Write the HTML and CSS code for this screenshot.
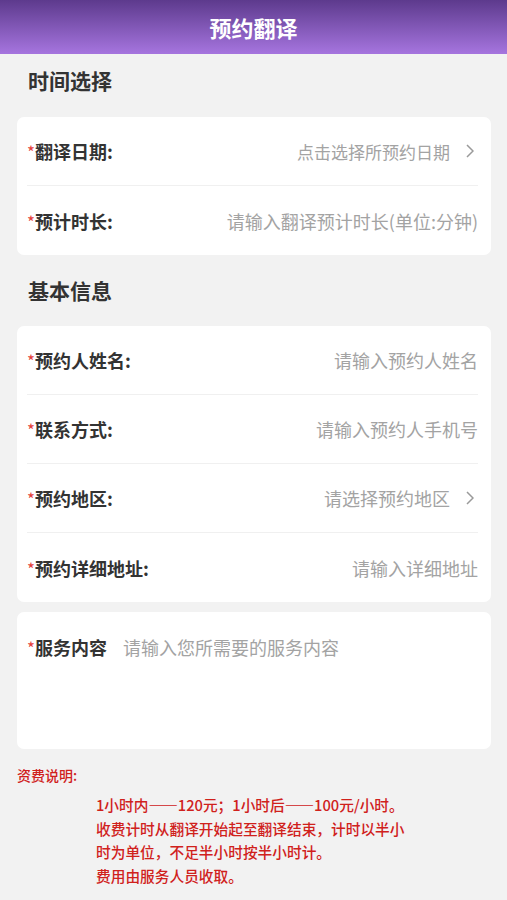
FILE: index.html
```html
<!DOCTYPE html>
<html lang="zh-CN">
<head>
    <meta charset="UTF-8">
    <meta name="viewport" content="width=device-width, initial-scale=1.0">
    <title>预约翻译</title>
    <link rel="stylesheet" href="styles.css">
</head>
<body>
    <div class="top_bar">预约翻译</div>

    <div class="sec_title first">时间选择</div>
    <div class="card">
        <div class="row">
            <span class="label"><i>*</i>翻译日期:</span>
            <span class="value pick">点击选择所预约日期</span>
            <span class="arrow"><svg width="8" height="14" viewBox="0 0 8 14"><path d="M1 1l6 6-6 6" fill="none" stroke="#9a9a9a" stroke-width="1.5"/></svg></span>
        </div>
        <div class="row">
            <span class="label"><i>*</i>预计时长:</span>
            <span class="value">请输入翻译预计时长(单位:分钟)</span>
        </div>
    </div>

    <div class="sec_title">基本信息</div>
    <div class="card">
        <div class="row">
            <span class="label"><i>*</i>预约人姓名:</span>
            <span class="value">请输入预约人姓名</span>
        </div>
        <div class="row">
            <span class="label"><i>*</i>联系方式:</span>
            <span class="value">请输入预约人手机号</span>
        </div>
        <div class="row">
            <span class="label"><i>*</i>预约地区:</span>
            <span class="value">请选择预约地区</span>
            <span class="arrow"><svg width="8" height="14" viewBox="0 0 8 14"><path d="M1 1l6 6-6 6" fill="none" stroke="#9a9a9a" stroke-width="1.5"/></svg></span>
        </div>
        <div class="row">
            <span class="label"><i>*</i>预约详细地址:</span>
            <span class="value">请输入详细地址</span>
        </div>
    </div>

    <div class="card textarea_card">
        <span class="label"><i>*</i>服务内容</span>
        <span class="ta_holder">请输入您所需要的服务内容</span>
    </div>

    <div class="fee_title">资费说明:</div>
    <div class="fee_text">
        <p>1小时内——120元；1小时后——100元/小时。</p>
        <p>收费计时从翻译开始起至翻译结束，计时以半小时为单位，不足半小时按半小时计。</p>
        <p>费用由服务人员收取。</p>
    </div>
</body>
</html>
```

FILE: styles.css
```css
body { margin:0; background:#f2f2f2; font-family:"Noto Sans CJK SC", "Liberation Sans", sans-serif; color:#333; }

.top_bar { height:54px; line-height:54px; text-align:center; color:#fff; font-size:22px; font-weight:bold;
    background:linear-gradient(to bottom, #5d3a8d, #a675df); }

.sec_title { padding:21px 0 22px 28px; line-height:28px; font-size:21px; font-weight:bold; color:#333; }
.sec_title.first { padding-top:12px; padding-bottom:23px; }

.card { margin:0 16px 0 17px; background:#fff; border-radius:7px; }

.row { display:flex; align-items:center; box-sizing:border-box; height:69px; margin:0 13px 0 10px; border-bottom:1px solid #f0f0f0; }
.row:last-child { border-bottom:0; }

.label { font-size:18px; font-weight:bold; color:#333; white-space:nowrap; }
.label i { font-style:normal; color:#e5413c; font-weight:normal; font-size:17px; }

.value { flex:1; text-align:right; font-size:18px; color:#a3a3a3; white-space:nowrap; }
.value.pick { font-size:17px; }
.arrow { width:16px; margin-left:12px; display:flex; justify-content:center; }

.textarea_card { display:flex; align-items:flex-start; height:114px; margin-top:10px; padding:23px 10px 0; line-height:24px; }
.ta_holder { margin-left:16px; font-size:18px; color:#a3a3a3; }

.fee_title { margin-top:16px; padding-left:17px; line-height:20px; font-size:14px; font-weight:500; color:#d0211c; }

.fee_text { width:312px; margin:8px 0 0 96px; font-size:14.7px; font-weight:500; color:#d0211c; line-height:23.7px; }
.fee_text p { margin:0; }
```
